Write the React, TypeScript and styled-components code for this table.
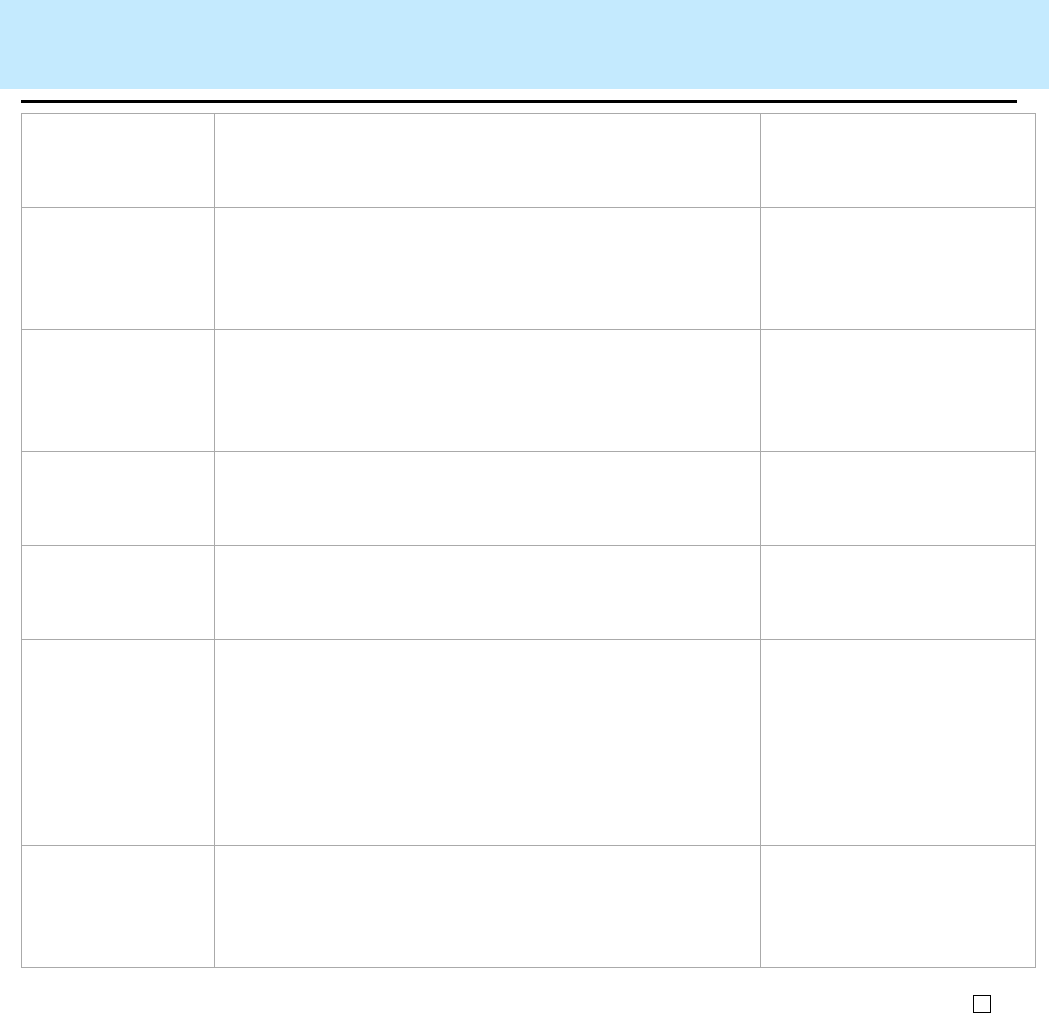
import React from "react";
import styled, { createGlobalStyle } from "styled-components";

const Global = createGlobalStyle`
  html, body { margin: 0; padding: 0; background: #ffffff; }
  body { font-family: "Liberation Sans", Arial, sans-serif; }
`;

const Page = styled.div`
  width: 1049px;
  display: flex;
  flex-direction: column;
`;

const Banner = styled.header`
  height: 89px;
  background: #c4eafe;
`;

const Rule = styled.div`
  margin: 11px 0 0 21px;
  width: 996px;
  height: 3px;
  background: #000000;
`;

const Grid = styled.div`
  margin: 10px 0 0 21px;
  width: 1015px;
  box-sizing: border-box;
  display: grid;
  grid-template-columns: 193px 546px 275px;
  border-top: 1px solid #aaaaaa;
  border-left: 1px solid #aaaaaa;
`;

const Cell = styled.div<{ $h: number }>`
  height: ${(p) => p.$h}px;
  box-sizing: border-box;
  border-right: 1px solid #aaaaaa;
  border-bottom: 1px solid #aaaaaa;
`;

const Footer = styled.div`
  display: flex;
  justify-content: flex-end;
  padding: 27px 58px 0 0;
`;

const Box = styled.div`
  width: 18px;
  height: 18px;
  box-sizing: border-box;
  border: 1px solid #000000;
`;

const rows = [94, 122, 122, 94, 94, 206, 122];

export default function App() {
  return (
    <Page>
      <Global />
      <Banner />
      <Rule />
      <Grid>
        {rows.map((h, i) => (
          <React.Fragment key={i}>
            <Cell $h={h} />
            <Cell $h={h} />
            <Cell $h={h} />
          </React.Fragment>
        ))}
      </Grid>
      <Footer>
        <Box />
      </Footer>
    </Page>
  );
}
